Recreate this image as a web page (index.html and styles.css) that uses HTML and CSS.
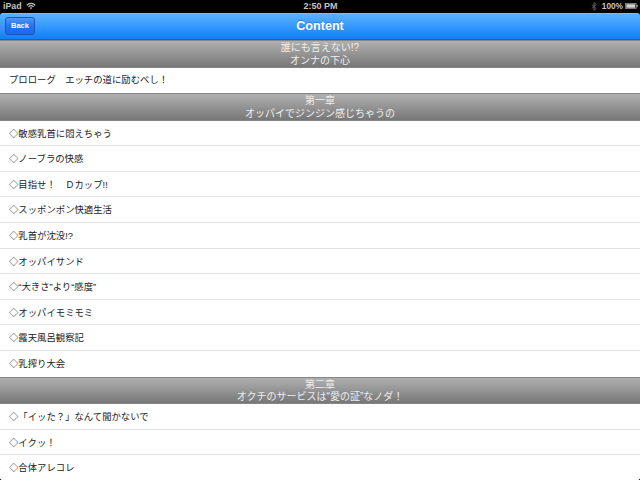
FILE: index.html
```html
<!DOCTYPE html>
<html lang="ja">
<head>
    <meta charset="UTF-8">
    <title>Content</title>
    <meta name="viewport" content="width=device-width, initial-scale=1.0">
    <link rel="stylesheet" href="styles.css">
</head>
<body>
    <div class="screen">
        <div class="status-bar">
            <div class="status-left">
                <span>iPad</span>
                <svg class="wifi" viewBox="0 0 20 14" fill="none" stroke="#c4c4c4" stroke-width="2.3">
                    <path d="M1.5 5.5C6 .5 14 .5 18.5 5.5M5 8.5C8 5.6 12 5.6 15 8.5"/>
                    <path d="M7.3 10.6C9 9.2 11 9.2 12.7 10.6L10 13.4Z" fill="#c4c4c4" stroke="none"/>
                </svg>
            </div>
            <div class="status-time">2:50 PM</div>
            <div class="status-right">
                <svg class="bluetooth" viewBox="0 0 10 16" fill="none" stroke="#686868" stroke-width="1.6">
                    <path d="M1 4.5L9 11.5L5 15V1L9 4.5L1 11.5"/>
                </svg>
                <span>100%</span>
                <svg class="battery" viewBox="0 0 26 12">
                    <rect x=".8" y=".8" width="21.4" height="10.4" fill="none" stroke="#aaa" stroke-width="1.4"/>
                    <rect x="2.6" y="2.4" width="17.8" height="7.2" fill="#d0d0d0"/>
                    <rect x="23" y="3.5" width="2.4" height="5" fill="#aaa"/>
                </svg>
            </div>
        </div>

        <div class="nav-bar">
            <a href="#" class="back-button">Back</a>
            <h1>Content</h1>
        </div>

        <div class="section-header">誰にも言えない!?<br>オンナの下心</div>
        <ul class="chapter-list">
            <li>プロローグ　エッチの道に励むべし！</li>
        </ul>

        <div class="section-header">第一章<br>オッパイでジンジン感じちゃうの</div>
        <ul class="chapter-list">
            <li><span class="mark">◇</span>敏感乳首に悶えちゃう</li>
            <li><span class="mark">◇</span>ノーブラの快感</li>
            <li><span class="mark">◇</span>目指せ！　Ｄカップ!!</li>
            <li><span class="mark">◇</span>スッポンポン快適生活</li>
            <li><span class="mark">◇</span>乳首が沈没!?</li>
            <li><span class="mark">◇</span>オッパイサンド</li>
            <li><span class="mark">◇</span>“大きさ”より“感度”</li>
            <li><span class="mark">◇</span>オッパイモミモミ</li>
            <li><span class="mark">◇</span>露天風呂観察記</li>
            <li><span class="mark">◇</span>乳搾り大会</li>
        </ul>

        <div class="section-header">第二章<br>オクチのサービスは“愛の証”なノダ！</div>
        <ul class="chapter-list">
            <li><span class="mark">◇</span>「イッた？」なんて聞かないで</li>
            <li><span class="mark">◇</span>イクッ！</li>
            <li><span class="mark">◇</span>合体アレコレ</li>
        </ul>
    </div>
</body>
</html>
```
FILE: styles.css
```css
* {
    box-sizing: border-box;
}

body {
    margin: 0;
    background-color: #000;
    font-family: "Liberation Sans", "Noto Sans CJK JP", sans-serif;
}

.screen {
    width: 640px;
    height: 480px;
    overflow: hidden;
    background: linear-gradient(#000 20px, #fff 20px);
    border-radius: 0 0 3px 3px;
}

/* Status bar */
.status-bar {
    display: grid;
    grid-template-columns: 1fr auto 1fr;
    align-items: center;
    height: 12.5px;
    padding: 0 2px 0 3px;
    background-color: #000;
    color: #c4c4c4;
    font-size: 9px;
    font-weight: bold;
    line-height: 12px;
}

.status-left,
.status-right {
    display: flex;
    align-items: center;
}

.status-left {
    gap: 4px;
    font-size: 8.8px;
}

.status-right {
    justify-content: flex-end;
    gap: 2px;
    font-size: 8.3px;
}

.wifi {
    width: 10px;
    height: 8px;
}

.bluetooth {
    width: 6px;
    height: 9px;
    margin-right: 3px;
}

.battery {
    width: 13px;
    height: 6px;
}

/* Navigation bar */
.nav-bar {
    display: grid;
    grid-template-columns: 1fr auto 1fr;
    align-items: center;
    height: 27.5px;
    padding: 0 5px;
    background: linear-gradient(#5cb1ff, #3399ff 50%, #1680fb 95%);
    border-top: 1px solid #7cbcf5;
    border-bottom: 1px solid #24619f;
    border-radius: 3px 3px 0 0;
}

.nav-bar h1 {
    margin: 0;
    color: #fff;
    font-size: 12.6px;
    line-height: 16px;
    text-shadow: 0 -1px 0 rgba(0, 50, 120, 0.35);
}

.back-button {
    justify-self: start;
    width: 30px;
    height: 18px;
    border: 1px solid #1c57b4;
    border-radius: 3px;
    background: linear-gradient(#4c98f8, #2872ee 50%, #1c68ea);
    color: #fff;
    font-size: 7.5px;
    font-weight: bold;
    line-height: 16px;
    text-align: center;
    text-decoration: none;
}

/* Table sections */
.section-header {
    height: 27.5px;
    padding-top: 1px;
    background: linear-gradient(#b0b0b0, #777);
    border-top: 1px solid #858585;
    border-bottom: 1px solid #858585;
    color: #eee;
    font-size: 10px;
    line-height: 12.5px;
    text-align: center;
}

.chapter-list {
    margin: 0;
    padding: 0;
    list-style: none;
    background-color: #fff;
}

.chapter-list li {
    height: 25.6px;
    padding-left: 9px;
    border-bottom: 1px solid #e2e2e2;
    color: #222;
    font-size: 9.375px;
    line-height: 25px;
    white-space: pre;
}

.chapter-list li:last-child {
    border-bottom: none;
}

.mark {
    font-family: "Noto Sans CJK JP", sans-serif;
}
```
